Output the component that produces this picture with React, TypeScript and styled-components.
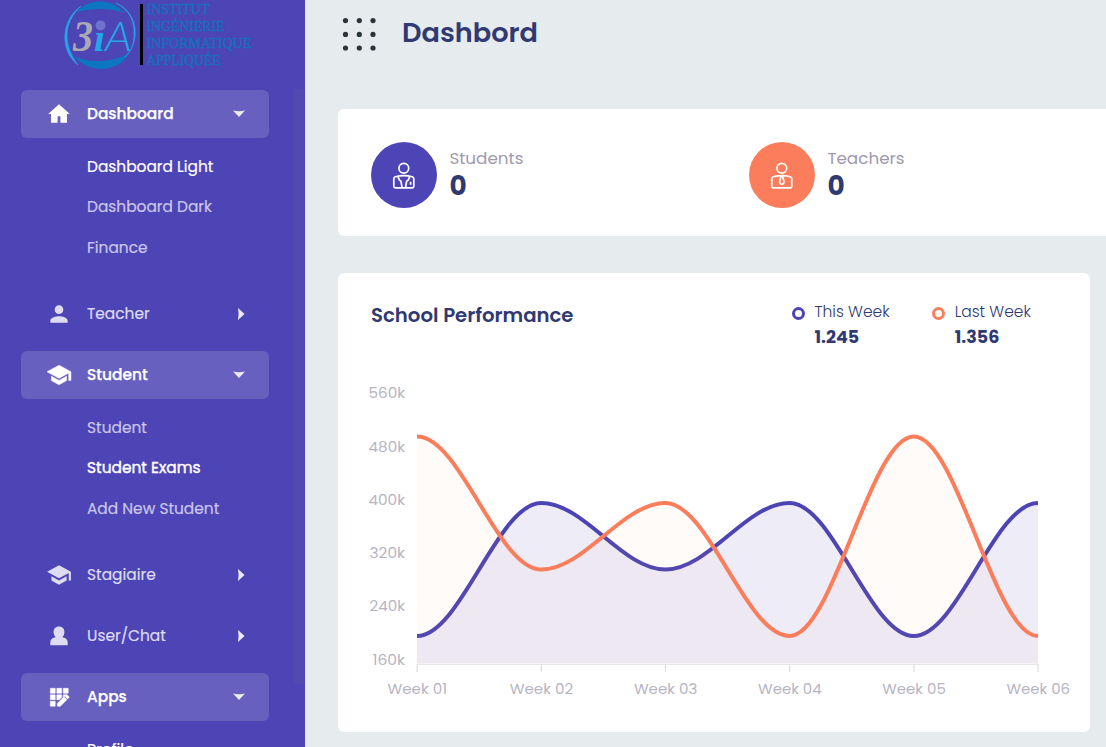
import React from "react";
import styled, { createGlobalStyle } from "styled-components";

const GlobalStyle = createGlobalStyle`
  * { box-sizing: border-box; }
  body {
    margin: 0;
    background: #e6ebee;
    font-family: Poppins, Inter, "Liberation Sans", sans-serif;
    overflow: hidden;
  }
`;

const Page = styled.div`
  display: flex;
  width: 1106px;
  height: 747px;
  overflow: hidden;
`;

const Sidebar = styled.aside`
  position: relative;
  flex: 0 0 305px;
  height: 747px;
  overflow: hidden;
  background: #4d44b5;
`;

const Brand = styled.div`
  height: 90px;
  padding-left: 60px;
  svg { display: block; }
`;

const ScrollTrack = styled.div`
  position: absolute;
  top: 89px;
  right: 1px;
  width: 11px;
  height: 595px;
  background: #504ab1;
`;

const Menu = styled.nav`
  display: flex;
  flex-direction: column;
  gap: 13px;
  padding: 0 36px 0 21px;
`;

const MenuItem = styled.div<{ $active?: boolean }>`
  display: flex;
  align-items: center;
  height: 48px;
  padding: 0 24px 2px 25px;
  border-radius: 6px;
  background: ${(p) => (p.$active ? "#6860bf" : "transparent")};
  color: ${(p) => (p.$active ? "#fff" : "#dedcf1")};
  font-size: 15.4px;
  font-weight: ${(p) => (p.$active ? 500 : 400)};
  -webkit-text-stroke: ${(p) => (p.$active ? "0.25px" : "0.2px")} currentColor;
`;

const MenuIcon = styled.svg<{ $heavy?: boolean }>`
  width: 26px;
  height: 26px;
  margin: 1px 15px 0 0;
  fill: currentColor;
  stroke: currentColor;
  stroke-width: ${(p) => (p.$heavy ? 0.5 : 0)};
`;

const Label = styled.span`
  white-space: nowrap;
`;

const Arrow = styled.svg`
  margin: 1px 0 0 auto;
  fill: #eceaf7;
`;

const SubMenu = styled.div`
  display: flex;
  flex-direction: column;
  height: 139px;
  margin-top: -13px;
  padding: 9px 0 0 66px;
`;

const SubItem = styled.div<{ $bright?: boolean; $strong?: boolean }>`
  flex: 0 0 40.4px;
  line-height: 40px;
  font-size: 15.4px;
  font-weight: 400;
  color: ${(p) => (p.$bright ? "#fff" : "#cac7e9")};
  -webkit-text-stroke: ${(p) => (p.$strong ? "0.4px" : "0.2px")} currentColor;
`;

const Main = styled.main`
  flex: 0 0 801px;
  padding-left: 33px;
  overflow: hidden;
`;

const Header = styled.header`
  display: flex;
  align-items: flex-start;
  height: 109px;
  padding: 15px 0 0 4px;
`;

const Title = styled.h1`
  margin: 0 0 0 22px;
  color: #303972;
  font-size: 27.2px;
  line-height: 36px;
  font-weight: 600;
`;

const StatsCard = styled.section`
  display: grid;
  grid-template-columns: 378px 378px;
  width: 800px;
  height: 127px;
  padding: 33px;
  border-radius: 6px;
  background: #fff;
`;

const Stat = styled.div`
  display: flex;
  gap: 12.4px;
`;

const StatIcon = styled.div<{ $color: string }>`
  display: grid;
  place-items: center;
  width: 66px;
  height: 66px;
  border-radius: 50%;
  background: ${(p) => p.$color};
`;

const StatName = styled.div`
  padding-top: 4px;
  color: #a098ae;
  font-size: 16.8px;
  line-height: 24px;
`;

const StatValue = styled.div`
  padding-top: 1px;
  color: #303972;
  font-size: 26.4px;
  line-height: 30px;
  font-weight: 700;
`;

const ChartCard = styled.section`
  width: 752px;
  height: 459px;
  margin-top: 37px;
  border-radius: 6px;
  background: #fff;
`;

const ChartHead = styled.div`
  display: flex;
  height: 97px;
  padding: 26px 0 0 33px;
`;

const ChartTitle = styled.h2`
  width: 421px;
  margin: 0;
  color: #303972;
  font-size: 19.7px;
  line-height: 32px;
  font-weight: 600;
`;

const Legend = styled.div`
  display: flex;
  width: 140.2px;
  gap: 9.5px;
`;

const Ring = styled.span<{ $color: string }>`
  width: 13px;
  height: 13px;
  margin-top: 7.5px;
  border: 3px solid ${(p) => p.$color};
  border-radius: 50%;
`;

const LegendName = styled.div`
  color: #303972;
  font-size: 15.5px;
  line-height: 25px;
  font-weight: 300;
`;

const LegendValue = styled.div`
  color: #303972;
  font-size: 17.5px;
  line-height: 26px;
  font-weight: 700;
`;

const AxisText = styled.text`
  fill: #b6b4c3;
  font-size: 15px;
`;

const icons = {
  home: "M10.700 20v-6h2.600v6h6.100v-8H22L12 3 2 12h2.600v8z",
  person: "M12 12c2.2 0 4-1.8 4-4s-1.8-4-4-4-4 1.8-4 4 1.8 4 4 4zm0 2c-2.7 0-8 1.3-8 4v2h16v-2c0-2.7-5.3-4-8-4z",
  school: "M5 13.18v4L12 21l7-3.82v-4L12 17l-7-3.82zM12 3 1 9l11 6 9-4.91V17h2V9L12 3z",
  bust: "M12 3.300C8.900 3.300 7 5.400 7 8.300c0 2 .8 3.700 2 4.800C6 13.500 4 15 4 17.500V20.500h16v-3c0-2.500-2-4-5-4.400 1.200-1.100 2-2.800 2-4.800 0-2.900-1.900-5-5-5z",
  apps: "M4 4h4.500v4.500H4zm6 0h4.500v4.500H10zM16 4h4.500v4.500H16zM4 10h4.500v4.500H4zm6 0h4.500v2.200l-2.300 2.300H10zM4 16h4.500v4.500H4zm12-6h2.500l-2.500 2.500zM10.500 17.900V20.500h2.700l6-6-2.700-2.700zm10.600-5.200c.3-.3.3-.8 0-1.100l-1.700-1.700c-.3-.3-.8-.3-1.100 0l-1.200 1.200 2.800 2.800z",
};

type Sub = { text: string; bright?: boolean; strong?: boolean };
type Item = { text: string; icon: keyof typeof icons; sub?: Sub[] };

const menu: Item[] = [
  { text: "Dashboard", icon: "home", sub: [
    { text: "Dashboard Light", bright: true },
    { text: "Dashboard Dark" },
    { text: "Finance" },
  ] },
  { text: "Teacher", icon: "person" },
  { text: "Student", icon: "school", sub: [
    { text: "Student" },
    { text: "Student Exams", bright: true, strong: true },
    { text: "Add New Student" },
  ] },
  { text: "Stagiaire", icon: "school" },
  { text: "User/Chat", icon: "bust" },
  { text: "Apps", icon: "apps", sub: [{ text: "Profile", bright: true }] },
];

const Logo = () => (
  <svg width="200" height="72" viewBox="60 0 200 72">
    <path d="M77 12C87 -1 112 -3 124 13C112 8 91 8 77 12Z" fill="#0b76c2" />
    <path d="M73 55C86 64 116 63 130 52C119 73 89 75 73 55Z" fill="#0b76c2" />
    <path d="M81 6C60 21 60 51 78 65C63 45 63 23 81 6Z" fill="#22a7e8" stroke="#22a7e8" strokeWidth="0.600" />
    <path d="M116 3C129 10 135 20 134 37C133 47 131 51 125 57C139 45 141 14 116 3Z" fill="#22a7e8" stroke="#22a7e8" strokeWidth="0.600" />
    <text x="73" y="51" fontFamily="Liberation Serif, serif" fontStyle="italic" fontWeight="700" fontSize="45" textLength="20" lengthAdjust="spacingAndGlyphs" fill="#aaaab2">3</text>
    <text x="94" y="51" fontFamily="Liberation Serif, serif" fontStyle="italic" fontWeight="700" fontSize="38" textLength="11" lengthAdjust="spacingAndGlyphs" fill="#22a7e8">ı</text>
    <circle cx="100.500" cy="25.500" r="5" fill="#6f73ce" />
    <text x="105" y="51" fontFamily="Lato, sans-serif" fontStyle="italic" fontWeight="300" fontSize="41" textLength="27" lengthAdjust="spacingAndGlyphs" fill="#22a7e8">A</text>
    <rect x="140" y="4" width="3" height="61" fill="#000" />
    <g fontFamily="Liberation Serif, serif" fontSize="14.500" fill="#166fbd" stroke="#166fbd" strokeWidth="0.500">
      <text x="146.500" y="13.500" textLength="63" lengthAdjust="spacingAndGlyphs">INSTITUT</text>
      <text x="146.500" y="31" textLength="78" lengthAdjust="spacingAndGlyphs">INGÉNIERIE</text>
      <text x="146.500" y="48" textLength="105" lengthAdjust="spacingAndGlyphs">INFORMATIQUE</text>
      <text x="146.500" y="65" textLength="74" lengthAdjust="spacingAndGlyphs">APPLIQUÉE</text>
    </g>
  </svg>
);

const X0 = 79;
const STEP = 124.2;
const BASE = 293;
const yOf = (v: number) => 266 - (v - 200) * 0.665;

function curve(values: number[]) {
  let d = `M${X0} ${yOf(values[0])}`;
  for (let i = 1; i < values.length; i++) {
    const a = X0 + (i - 1) * STEP;
    const b = a + STEP;
    const k = STEP * 0.35;
    d += `C${a + k} ${yOf(values[i - 1])} ${b - k} ${yOf(values[i])} ${b} ${yOf(values[i])}`;
  }
  return d;
}

const series = [
  { color: "#4d44b5", fill: "#4d44b5", opacity: 0.1, values: [200, 400, 300, 400, 200, 400] },
  { color: "#fb7d5b", fill: "#fb9c5b", opacity: 0.04, values: [500, 300, 400, 200, 500, 200] },
];

const Chart = () => (
  <svg width="752" height="350" viewBox="0 0 752 350" style={{ display: "block" }}>
    {[560, 480, 400, 320, 240, 160].map((n, i) => {
      const w = [36.5, 36.5, 36.5, 35.5, 35.5, 32.5][i];
      return (
        <AxisText key={n} x={67 - w} y={[28, 82, 135, 188, 241, 295][i]} textLength={w} lengthAdjust="spacingAndGlyphs">{n}k</AxisText>
      );
    })}
    <rect x={X0} y="293.5" width="621" height="1.500" fill="#e7e7eb" />
    {[0, 1, 2, 3, 4, 5].map((i) => (
      <g key={i}>
        <rect x={X0 - 0.5 + i * STEP} y="294" width="1.200" height="8" fill="#dddde2" />
        <AxisText x={X0 - 29.5 + i * STEP + (i ? -2 : 0)} y="324" textLength={i ? 63.5 : 59.5} lengthAdjust="spacingAndGlyphs">Week 0{i + 1}</AxisText>
      </g>
    ))}
    <clipPath id="plot"><rect x={X0} y="0" width="621" height="294" /></clipPath>
    <g clipPath="url(#plot)">
      {series.map((s) => (
        <g key={s.color}>
          <path d={curve(s.values)} fill="none" stroke={s.color} strokeWidth="4" />
          <path d={`${curve(s.values)}V${BASE}H${X0}Z`} fill={s.fill} fillOpacity={s.opacity} />
        </g>
      ))}
    </g>
  </svg>
);

const PersonGlyph = ({ teacher }: { teacher?: boolean }) => (
  <svg width="24" height="28" viewBox="0 -0.800 24 28" fill="none" stroke="#fff" strokeWidth="1.700" strokeLinejoin="round">
    <circle cx="11.800" cy="6.500" r="4.900" />
    <path d="M3.300 15Q11.800 12.800 20.300 15Q21.800 15.400 21.800 17V24.500Q21.800 26 20.300 26H3.300Q1.800 26 1.800 24.500V17Q1.800 15.400 3.300 15Z" />
    {teacher ? (
      <path d="M11 14.500L9.600 20Q9.800 22.500 11.800 22.500Q13.800 22.500 14 20L12.600 14.500Z" />
    ) : (
      <path d="M6 15L7.300 18L9 19.500L10 25.500M17.600 15L16.300 18L14.600 19.500L13.600 25.500M18.600 20V23" />
    )}
  </svg>
);

export default function App() {
  return (
    <>
      <GlobalStyle />
      <Page>
        <Sidebar>
          <Brand><Logo /></Brand>
          <Menu>
            {menu.map((m) => (
              <React.Fragment key={m.text}>
                <MenuItem $active={!!m.sub}>
                  <MenuIcon viewBox="0 0 24 24" $heavy={!!m.sub && m.icon !== "home"}><path d={icons[m.icon]} /></MenuIcon>
                  <Label>{m.text}</Label>
                  {m.sub ? (
                    <Arrow width="12" height="7" viewBox="0 0 12 7"><path d="M0 .5Q6 2 12 .5L6 7Z" /></Arrow>
                  ) : (
                    <Arrow width="9" height="12" viewBox="0 0 9 12"><path d="M2 0Q3.200 6 2 12L8.500 6Z" /></Arrow>
                  )}
                </MenuItem>
                {m.sub && (
                  <SubMenu>
                    {m.sub.map((s) => (
                      <SubItem key={s.text} $bright={s.bright} $strong={s.strong}><Label>{s.text}</Label></SubItem>
                    ))}
                  </SubMenu>
                )}
              </React.Fragment>
            ))}
          </Menu>
          <ScrollTrack />
        </Sidebar>
        <Main>
          <Header>
            <svg width="38" height="38" viewBox="0 0 38 38" fill="#2a353a">
              {[3.5, 17.3, 31].map((x) => [5.6, 19.400, 33].map((y) => <circle key={`${x}-${y}`} cx={x} cy={y} r="2.600" />))}
            </svg>
            <Title><Label>Dashbord</Label></Title>
          </Header>
          <StatsCard>
            <Stat>
              <StatIcon $color="#4d44b5"><PersonGlyph /></StatIcon>
              <div>
                <StatName><Label>Students</Label></StatName>
                <StatValue>0</StatValue>
              </div>
            </Stat>
            <Stat>
              <StatIcon $color="#fb7d5b"><PersonGlyph teacher /></StatIcon>
              <div>
                <StatName><Label>Teachers</Label></StatName>
                <StatValue>0</StatValue>
              </div>
            </Stat>
          </StatsCard>
          <ChartCard>
            <ChartHead>
              <ChartTitle><Label>School Performance</Label></ChartTitle>
              <Legend>
                <Ring $color="#4d44b5" />
                <div>
                  <LegendName><Label>This Week</Label></LegendName>
                  <LegendValue><Label>1.245</Label></LegendValue>
                </div>
              </Legend>
              <Legend>
                <Ring $color="#fb7d5b" />
                <div>
                  <LegendName><Label>Last Week</Label></LegendName>
                  <LegendValue><Label>1.356</Label></LegendValue>
                </div>
              </Legend>
            </ChartHead>
            <Chart />
          </ChartCard>
        </Main>
      </Page>
    </>
  );
}
